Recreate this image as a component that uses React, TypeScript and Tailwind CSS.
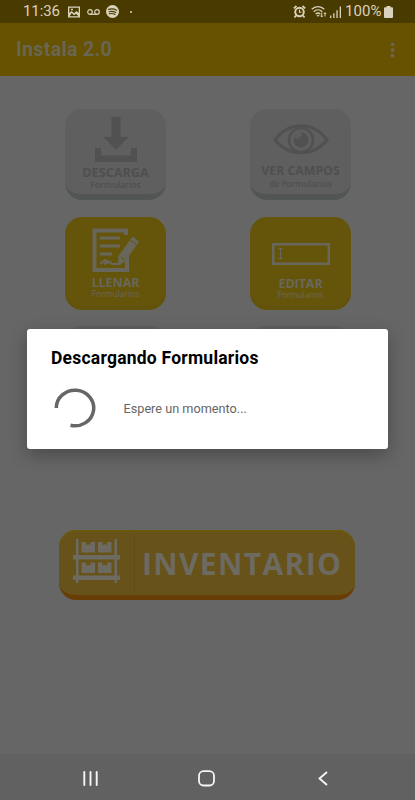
import type { ReactNode } from "react";

function StatusBar() {
  return (
    <div className="flex h-[23px] items-center bg-[#493a00] pl-[23px] pr-[21px] text-[#d9d3bd]">
      <span className="w-[38px] whitespace-nowrap text-[15px] leading-[23px] tracking-[-0.1px]">11:36</span>
      <svg className="ml-[7px] h-3 w-3" viewBox="0 0 12 12">
        <path fill="currentColor" fillRule="evenodd" d="M0 .5h12v11H0zM1.3 1.8v5.1L3.6 5l2.5 2.3L8.4 5l2.3 2V1.8zM3 2.8h2v1.4H3zM1.5 10.2h9L8 7.7 6.2 9.3 3.7 7z" />
      </svg>
      <svg className="ml-[7px] h-2 w-[13px]" viewBox="0 0 13 8" fill="none" stroke="currentColor" strokeWidth="1.2">
        <circle cx="3" cy="4" r="2.3" />
        <circle cx="10" cy="4" r="2.3" />
        <path d="M3 6.3h7" />
      </svg>
      <svg className="ml-[6px] h-[13px] w-[13px]" viewBox="0 0 13 13">
        <circle cx="6.5" cy="6.5" r="6.5" fill="currentColor" />
        <path d="M2.6 4.4c2.7-.8 5.6-.5 8 .8M3 6.7c2.3-.7 4.7-.4 6.8.7M3.3 8.8c2-.5 4-.3 5.700.7" fill="none" stroke="#493a00" strokeWidth="1.15" strokeLinecap="round" />
      </svg>
      <span className="ml-[11px] h-0.5 w-0.5 rounded-full bg-current" />
      <svg className="ml-auto h-[13px] w-[13px]" viewBox="0 0 13 13" fill="none" stroke="currentColor">
        <circle cx="6.5" cy="7" r="4.3" strokeWidth="1.9" />
        <path d="M.8 3.300 3.500 1M12.200 3.300 9.500 1M3 10.500l-1.500 2M10 10.500l1.500 2" strokeWidth="1.7" />
        <path d="M6.500 4.500V7.300h2" strokeWidth="1.1" />
      </svg>
      <svg className="ml-[5px] h-[13px] w-4" viewBox="0 0 16 13" fill="none" stroke="currentColor" strokeWidth="1.25">
        <path d="M.7 4.300c3.500-3.700 9.100-3.700 12.600 0M2.700 6.700c2.500-2.500 6.100-2.500 8.600 0M4.700 9c1.500-1.300 3.100-1.300 4.600 0" />
        <path d="M5.800 10.300h2.400L7 11.600z" fill="currentColor" strokeWidth=".5" />
        <path d="M10.700 7.500v4.500M9.500 10.700l1.200 1.300 1.200-1.300M14 11.500V7.800M12.800 9 14 7.700 15.200 9" strokeWidth="1" />
      </svg>
      <svg className="ml-[3px] h-3 w-3" viewBox="0 0 12 12" fill="currentColor">
        <path d="M0 9.500h1.300V12H0zM3.200 7.200h1.300V12H3.200zM6.400 4.200h1.300V12H6.400zM9.700.5H11V12H9.700z" />
      </svg>
      <span className="ml-[3px] w-[38px] whitespace-nowrap text-[15px] leading-[23px] tracking-[0.1px]">100%</span>
      <svg className="ml-px mr-px h-3 w-[9px]" viewBox="0 0 9 12" fill="currentColor">
        <path d="M2.500 0h4v1.200H8q1 0 1 1V11q0 1-1 1H1q-1 0-1-1V2.200q0-1 1-1h1.500z" />
      </svg>
    </div>
  );
}

function DownloadIcon() {
  return (
    <svg className="h-[46px] w-[44px]" viewBox="0 0 44 46" fill="#515151">
      <path d="M17.500 1h9v20h8L22 34 9.500 21h8zM1 32h6v7.500h30V32h6v14H1z" />
    </svg>
  );
}

function EyeIcon() {
  return (
    <svg className="h-[32px] w-[58px]" viewBox="0 0 58 32">
      <path d="M3 16C17-3 41-3 55 16 41 33 17 33 3 16Z" fill="none" stroke="#515151" strokeWidth="3" />
      <circle cx="29" cy="16" r="12" fill="none" stroke="#515151" strokeWidth="2.5" />
      <circle cx="29" cy="16" r="7.5" fill="#515151" />
      <path d="M22 14q1-6 7-6l1 4-4 3z" fill="#5d5d5d" />
    </svg>
  );
}

function FormIcon() {
  return (
    <svg className="h-[45px] w-[49px]" viewBox="0 0 49 45" fill="none" stroke="#69675b">
      <path d="M35 7V2.500H3.500v39.500H36V29" strokeWidth="4" />
      <path d="M9 10h20M9 18h20M9 26h12" strokeWidth="3" />
      <path d="m9 36 5-4 2 1-3 3 6-2 2 2h9" strokeWidth="2" />
      <path d="m28 28 13.500-19 6 4.500L34 33l-6.500 4z" fill="#69675b" strokeWidth="1" />
      <path d="m30 29 4 3M39 12l6 4.500" stroke="#65550a" strokeWidth="1" />
    </svg>
  );
}

function FieldIcon() {
  return (
    <svg className="h-[22px] w-[58px]" viewBox="0 0 58 22" fill="none" stroke="#69675b">
      <rect x="1.25" y="1.25" width="55.5" height="19.5" strokeWidth="2.5" />
      <path d="M6.500 5.500h4M8.500 5.500v10M6.500 15.500h4" strokeWidth="1" />
    </svg>
  );
}

type TileProps = {
  title: string;
  subtitle: string;
  icon: ReactNode;
  yellow?: boolean;
  iconClass: string;
  titleClass: string;
  subtitleClass: string;
};

function Tile({ title, subtitle, icon, yellow, iconClass, titleClass, subtitleClass }: TileProps) {
  const surface = yellow
    ? "h-[93px] bg-[#65550a] text-[#69675b] border-[#62520a] border-b-[5px] pt-[1px]"
    : "h-[91px] bg-[#5f5f5f] text-[#4f4f4f] border-[#515654] border-b-[6px]";
  return (
    <div className={`flex w-[101px] flex-col items-center rounded-[17px] font-['Open_Sans',sans-serif] ${surface}`}>
      <div className={`flex shrink-0 items-start justify-center ${iconClass}`}>{icon}</div>
      <div className={`whitespace-nowrap font-bold leading-[15px] ${titleClass}`}>{title}</div>
      <div className={`whitespace-nowrap leading-[9px] ${subtitleClass}`}>{subtitle}</div>
    </div>
  );
}

function ShelfIcon() {
  return (
    <svg className="mb-[3px] h-[44px] w-[47px]" viewBox="0 0 47 44" fill="#6d6a61">
      <path d="M3 0h2.500v44H3zM41.500 0H44v44h-2.500zM0 16h47v4.500H0zM0 36.500h47V41H0zM8.500 3H13v3.500l2.200-1.500 2.300 1.500V3H22v10.500H8.500zM25 3h4.500v3.500l2.200-1.500L34 6.500V3h4.500v10.500H25zM8.500 23.500H13V27l2.200-1.500 2.300 1.500v-3.500H22V34H8.500zM25 23.500h4.500V27l2.200-1.500L34 27v-3.500h4.500V34H25z" />
    </svg>
  );
}

function InventoryButton() {
  return (
    <div className="ml-[59px] mt-[114px] flex h-[70px] w-[296px] items-center rounded-[17px] border-b-[5px] border-[#693e06] bg-[#67521a] pl-[14px] font-['Open_Sans',sans-serif] shadow-[inset_0_2px_0_#6b580d]">
      <ShelfIcon />
      <div className="ml-[14px] h-[58px] w-px bg-[#604a16]" />
      <span className="ml-[7px] mt-[2px] whitespace-nowrap text-[30px] font-bold leading-[40px] tracking-[1.35px] text-[#6d6a61]">
        INVENTARIO
      </span>
    </div>
  );
}

function ProgressDialog() {
  return (
    <div className="absolute left-[26.5px] top-[328.5px] h-[120px] w-[361.5px] rounded-[3px] bg-white pl-[24.5px] pt-[17.5px] shadow-[0_6px_18px_rgba(0,0,0,0.28)]">
      <h2 className="whitespace-nowrap text-[17.5px] font-bold leading-6 tracking-[0.23px] text-black">Descargando Formularios</h2>
      <div className="mt-[18px] flex items-center">
        <svg className="ml-[3px] h-[42px] w-[42px]" viewBox="0 0 42 42" fill="none" stroke="#666" strokeWidth="3.5">
          <path d="M2.300 20A18.700 17.800 0 1 1 16.500 37.300" />
        </svg>
        <span className="ml-[27.5px] whitespace-nowrap text-[12.7px] leading-5 text-[#666]">Espere un momento...</span>
      </div>
    </div>
  );
}

function NavigationBar() {
  return (
    <div className="mt-auto flex h-[46px] items-center bg-[#616161] pl-[83px] pt-[3px]">
      <svg className="h-[15px] w-[15px]" viewBox="0 0 15 15" stroke="#f5f5f5" strokeWidth="1.9" strokeLinecap="round">
        <path d="M1.300 1v13M7.500 1v13M13.700 1v13" />
      </svg>
      <svg className="ml-[100px] h-[17px] w-[17px]" viewBox="0 0 17 17" fill="none" stroke="#f5f5f5" strokeWidth="1.8">
        <rect x="1" y="1.2" width="15" height="14.3" rx="4.5" />
      </svg>
      <svg className="ml-[103px] h-[15px] w-[10px]" viewBox="0 0 10 15" fill="none" stroke="#f5f5f5" strokeWidth="1.9">
        <path d="M9 1 1.500 7.500 9 14" />
      </svg>
    </div>
  );
}

export default function App() {
  return (
    <div className="relative flex h-[800px] w-[415px] flex-col overflow-hidden bg-[#666] font-['Roboto',sans-serif]">
      <StatusBar />
      <header className="flex h-[53px] items-center justify-between bg-[#665200] pl-4 pr-[20px] text-[#696653]">
        <h1 className="text-[19.5px] font-bold leading-6 tracking-[0.35px]">Instala 2.0</h1>
        <svg className="h-4 w-[5px]" viewBox="0 0 5 16" fill="currentColor">
          <circle cx="2.5" cy="2.3" r="1.9" />
          <circle cx="2.5" cy="8" r="1.9" />
          <circle cx="2.5" cy="13.7" r="1.9" />
        </svg>
      </header>
      <main>
        <div className="ml-[65px] mt-[33px] grid w-[286px] grid-cols-[101px_101px] gap-x-[84px] gap-y-[17px]">
          <Tile title="DESCARGA" subtitle="Formularios" icon={<DownloadIcon />} iconClass="h-[56px] pt-[7px]" titleClass="text-[12.7px]" subtitleClass="mt-px text-[8.7px] font-semibold" />
          <Tile title="VER CAMPOS" subtitle="de Formularios" icon={<EyeIcon />} iconClass="h-[54px] pt-[15px]" titleClass="text-[12.3px]" subtitleClass="mt-0.5 text-[8.6px] font-semibold" />
          <Tile yellow title="LLENAR" subtitle="Formularios" icon={<FormIcon />} iconClass="h-[57px] pt-[10px]" titleClass="text-[12.4px]" subtitleClass="-mt-px text-[8.5px]" />
          <Tile yellow title="EDITAR" subtitle="Formularios" icon={<FieldIcon />} iconClass="h-[58px] pt-[25px]" titleClass="text-[12.4px]" subtitleClass="-mt-px text-[8.2px]" />
          <div className="-mt-px h-[90px] rounded-[17px] bg-[#5f5f5f]" />
          <div className="-mt-px h-[90px] rounded-[17px] bg-[#5f5f5f]" />
        </div>
        <InventoryButton />
      </main>
      <ProgressDialog />
      <NavigationBar />
    </div>
  );
}
